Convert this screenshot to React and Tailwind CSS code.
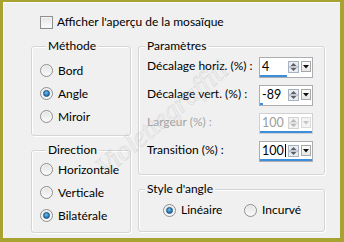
import React from 'react';

const font = { fontFamily: 'Lato, "Noto Sans", sans-serif' };

function Radio({ checked }) {
  return (
    <span className="flex h-[13px] w-[13px] shrink-0 items-center justify-center rounded-full border border-[#8e8f8f] bg-[linear-gradient(180deg,#e2e2e2,#fbfbfb)] shadow-[inset_0_0_0_1px_#f6f6f6]">
      {checked && (
        <span className="h-[7px] w-[7px] rounded-full border border-[#1c5480] bg-[radial-gradient(circle_at_45%_35%,#6cc3f3,#2a78b6_60%,#1b5d92)]" />
      )}
    </span>
  );
}

function Option({ label, checked, className = '' }) {
  return (
    <div className={`flex items-center gap-[5px] ${className}`}>
      <Radio checked={checked} />
      <span>{label}</span>
    </div>
  );
}

function Group({ title, className = '', children }) {
  return (
    <div
      className={`flex flex-col rounded-[3px] border border-[#d5d5d5] shadow-[inset_1px_1px_0_#fff,1px_1px_0_#fff] ${className}`}
    >
      <div className="-mt-[9px] ml-[6px] w-fit bg-[#f0f0f0] px-[2px] leading-4">{title}</div>
      {children}
    </div>
  );
}

function Spinner({ disabled }) {
  const tri = disabled ? '#b9b9b9' : '#5d6167';
  return (
    <svg width="11" height="12" viewBox="0 0 11 12" className="shrink-0">
      <rect x="0.5" y="0.5" width="10" height="11" fill={disabled ? '#f2f2f2' : '#e9edf2'} stroke={disabled ? '#d2d2d2' : '#a9b3bf'} />
      <line x1="1" y1="6" x2="10" y2="6" stroke={disabled ? '#cfcfcf' : '#9aa4b0'} />
      <path d="M5.5 2 L8.5 5 H2.5 Z" fill={tri} />
      <path d="M5.5 10 L8.5 7 H2.5 Z" fill={tri} />
    </svg>
  );
}

function Drop({ disabled }) {
  return (
    <span
      className={`ml-[2px] flex h-[11px] w-[10px] shrink-0 items-center justify-center border ${
        disabled ? 'border-[#dadada] bg-[#f4f4f4]' : 'border-[#a8a8a8] bg-[linear-gradient(180deg,#fdfdfd,#e6e6e6)]'
      }`}
    >
      <svg width="6" height="4" viewBox="0 0 6 4">
        <path d="M0 0 H6 L3 3.5 Z" fill={disabled ? '#c2c2c2' : '#111'} />
      </svg>
    </span>
  );
}

function Spin({ value, disabled, caret }) {
  const pct = ((value + 100) / 200) * 100;
  return (
    <div
      className={`flex h-[21px] w-[54px] flex-col border bg-white ${
        disabled ? 'border-[#cfd1d4]' : 'border-[#abadb3]'
      }`}
    >
      <div className="flex flex-1 items-center pl-[2px] pr-[1px]">
        <span className={`flex w-[27px] items-center text-[12.5px] leading-4 ${disabled ? 'text-[#9c9c9c]' : ''}`}>
          {value}
          {caret && <span className="ml-[1px] h-[13px] w-px bg-black" />}
        </span>
        <Spinner disabled={disabled} />
        <Drop disabled={disabled} />
      </div>
      <div className="h-[2px] bg-[#3d8edb]" style={{ width: `${pct}%` }} />
    </div>
  );
}

function Row({ label, value, disabled, caret }) {
  return (
    <div className="flex h-[21px] items-center justify-between">
      <span className={`-mt-[3px] whitespace-nowrap ${disabled ? 'text-[#a3a3a3]' : ''}`}>{label}</span>
      <Spin value={value} disabled={disabled} caret={caret} />
    </div>
  );
}

export default function App() {
  return (
    <div
      className="relative h-[242px] w-[344px] overflow-hidden border-t-[2px] border-r-[4px] border-b-[4px] border-l-[3px] border-[#a6a333] bg-[#f0f0f0] text-[12px] leading-4 text-black shadow-[inset_1px_1px_0_#fafafa]"
      style={font}
    >
      {/* watermark */}
      <div className="pointer-events-none absolute left-[78px] top-[108px] -rotate-[40deg] font-['Liberation_Serif',serif] text-[28px] italic text-transparent opacity-50 [-webkit-text-stroke:0.5px_#bdbdbd]">
        Violettegraffiti
      </div>

      <div className="flex flex-col pl-[37px] pt-[14px]">
        <div className="flex h-[13px] items-center gap-[4px]">
          <span className="h-[13px] w-[13px] border border-[#8e8f8f] bg-[linear-gradient(180deg,#e4e4e4,#fcfcfc)] shadow-[inset_0_0_0_1px_#f4f4f4]" />
          <span className="mt-[-1px]">Afficher l'aperçu de la mosaïque</span>
        </div>
      </div>

      <div className="mt-[17px] flex gap-[7px] pl-[28px]">
        <div className="flex w-[100px] flex-col gap-[14px]">
          <Group title="Méthode" className="h-[90px] pl-[8px]">
            <div className="mt-[5px] flex flex-col">
              <Option label="Bord" className="h-[23px]" />
              <Option label="Angle" checked className="h-[23px]" />
              <Option label="Miroir" className="h-[23px]" />
            </div>
          </Group>
          <Group title="Direction" className="h-[83px] pl-[8px]">
            <div className="flex flex-col">
              <Option label="Horizontale" className="h-[23px]" />
              <Option label="Verticale" className="h-[23px]" />
              <Option label="Bilatérale" checked className="h-[23px]" />
            </div>
          </Group>
        </div>

        <div className="flex w-[187px] flex-col gap-[14px]">
          <Group title="Paramètres" className="h-[129px]">
            <div className="mt-[3px] flex flex-col gap-[7px] pl-[8px] pr-[11px]">
              <Row label="Décalage horiz. (%) :" value={4} />
              <Row label="Décalage vert. (%) :" value={-89} />
              <Row label="Largeur (%) :" value={100} disabled />
              <Row label="Transition (%) :" value={100} caret />
            </div>
          </Group>
          <Group title="Style d'angle" className="h-[43px]">
            <div className="flex h-[26px] items-center pl-[24px]">
              <Option label="Linéaire" checked className="w-[81px]" />
              <Option label="Incurvé" />
            </div>
          </Group>
        </div>
      </div>
    </div>
  );
}
